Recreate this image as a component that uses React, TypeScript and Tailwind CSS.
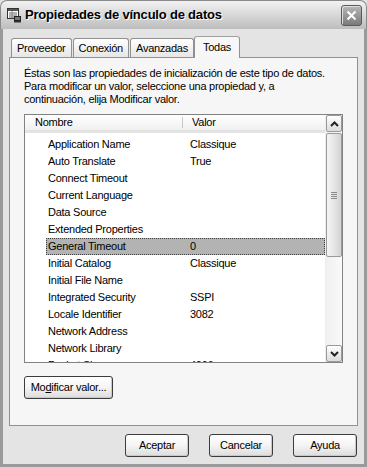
import React from 'react';

const rows: [string, string][] = [
  ['Application Name', 'Classique'],
  ['Auto Translate', 'True'],
  ['Connect Timeout', ''],
  ['Current Language', ''],
  ['Data Source', ''],
  ['Extended Properties', ''],
  ['General Timeout', '0'],
  ['Initial Catalog', 'Classique'],
  ['Initial File Name', ''],
  ['Integrated Security', 'SSPI'],
  ['Locale Identifier', '3082'],
  ['Network Address', ''],
  ['Network Library', ''],
  ['Packet Size', '4096'],
];

const XpButton: React.FC<{ children: React.ReactNode; className?: string }> = ({ children, className }) => (
  <button
    className={`h-[23px] rounded-[3px] border border-[#3c3c3c] bg-gradient-to-b from-[#ffffff] via-[#f4f4f4] to-[#dcdcdc] text-[11px] text-black shadow-[inset_-1px_-1px_0_#c8c8c8] ${className ?? ''}`}
  >
    {children}
  </button>
);

const DataLinkIcon = () => (
  <svg width="16" height="16" viewBox="0 0 16 16">
    <rect x="1.5" y="1.5" width="11" height="10" fill="#fff" stroke="#333" />
    <rect x="2" y="2" width="10" height="2" fill="#555" />
    <line x1="3" y1="6" x2="11" y2="6" stroke="#666" />
    <line x1="3" y1="8" x2="11" y2="8" stroke="#666" />
    <line x1="3" y1="10" x2="8" y2="10" stroke="#666" />
    <line x1="6" y1="4" x2="6" y2="11" stroke="#888" />
    <rect x="8.5" y="9.5" width="6" height="4" fill="#777" stroke="#222" />
    <rect x="8" y="14" width="7" height="1.5" fill="#333" />
  </svg>
);

const Arrow: React.FC<{ up?: boolean }> = ({ up }) => (
  <svg width="9" height="6" viewBox="0 0 9 6">
    <path d={up ? 'M1 5 L4.5 1.5 L8 5' : 'M1 1 L4.5 4.5 L8 1'} fill="none" stroke="#222" strokeWidth="2" />
  </svg>
);

export default function App() {
  return (
    <div
      className="w-[367px] h-[467px] flex flex-col bg-[#e2e2e2] overflow-hidden tracking-[-0.25px]"
      style={{ fontFamily: '"Liberation Sans", Arial, sans-serif' }}
    >
      {/* title bar */}
      <div className="h-[29px] shrink-0 flex items-center rounded-t-[7px] bg-gradient-to-b from-[#f2f2f2] via-[#d8d8d8] to-[#bdbdbd] border border-b-0 border-[#8a8a8a] pl-[5px] pr-[4px]">
        <DataLinkIcon />
        <span className="ml-[3px] text-[13px] font-bold text-black tracking-[-0.2px] [text-shadow:1px_1px_0_#ffffff]">
          Propiedades de vínculo de datos
        </span>
        <div className="ml-auto w-[21px] h-[21px] rounded-[3px] border border-[#5a5a5a] bg-gradient-to-b from-[#b8b8b8] to-[#7a7a7a] flex items-center justify-center shadow-[inset_1px_1px_0_#e0e0e0]">
          <svg width="11" height="11" viewBox="0 0 11 11">
            <path d="M1.5 1.5 L9.5 9.5 M9.5 1.5 L1.5 9.5" stroke="#fff" strokeWidth="2" />
          </svg>
        </div>
      </div>

      {/* body */}
      <div className="flex-1 flex flex-col border-x-[3px] border-b-[3px] border-[#9a9a9a] bg-[#e4e4e4] px-[6px]">
        {/* tabs */}
        <div className="mt-[6px] h-[22px] flex items-end pl-[2px] text-[11px] text-black">
          <div className="h-[19px] px-[5px] flex items-center border border-b-0 border-[#919191] rounded-t-[3px] bg-gradient-to-b from-[#ffffff] to-[#e6e6e6]">Proveedor</div>
          <div className="h-[19px] px-[5px] ml-[1px] flex items-center border border-b-0 border-[#919191] rounded-t-[3px] bg-gradient-to-b from-[#ffffff] to-[#e6e6e6]">Conexión</div>
          <div className="h-[19px] px-[5px] ml-[1px] flex items-center border border-b-0 border-[#919191] rounded-t-[3px] bg-gradient-to-b from-[#ffffff] to-[#e6e6e6]">Avanzadas</div>
          <div className="h-[22px] px-[8px] -mb-[1px] relative z-10 flex items-center border border-b-0 border-[#919191] rounded-t-[3px] bg-[#f7f7f7] border-t-[#a0a0a0]">Todas</div>
        </div>

        {/* panel */}
        <div className="h-[369px] border border-[#919191] bg-[#f6f6f6] px-[14px] pt-[9px] flex flex-col">
          <p className="text-[11px] leading-[13px] text-black">
            Éstas son las propiedades de inicialización de este tipo de datos.
            <br />
            Para modificar un valor, seleccione una propiedad y, a
            <br />
            continuación, elija Modificar valor.
          </p>

          {/* list */}
          <div className="mt-[8px] h-[249px] border border-[#828282] bg-white flex overflow-hidden">
            <div className="flex-1 flex flex-col overflow-hidden">
              <div className="h-[18px] shrink-0 flex text-[11px] bg-gradient-to-b from-[#ffffff] to-[#f0f0f0] border-b-[3px] border-[#e3e3e3]">
                <div className="w-[158px] pl-[10px] flex items-center border-r border-[#c8c8c8] my-[2px]">Nombre</div>
                <div className="pl-[9px] flex items-center">Valor</div>
              </div>
              <div className="pt-[3px] text-[11px]">
                {rows.map(([name, value]) => {
                  const sel = name === 'General Timeout';
                  return (
                    <div
                      key={name}
                      className={`h-[17px] flex items-center ml-[21px] ${sel ? 'bg-[#b3b3b3] outline outline-1 outline-dotted outline-[#404040] -outline-offset-1' : ''}`}
                    >
                      <div className="w-[144px] pl-[2px] shrink-0">{name}</div>
                      <div>{value}</div>
                    </div>
                  );
                })}
              </div>
            </div>
            {/* scrollbar */}
            <div className="w-[17px] shrink-0 flex flex-col bg-gradient-to-r from-[#f0f0f0] to-[#fafafa] border-l border-[#eeeeee]">
              <div className="h-[17px] rounded-[2px] border border-[#9a9a9a] bg-gradient-to-b from-[#ffffff] to-[#dcdcdc] flex items-center justify-center">
                <Arrow up />
              </div>
              <div className="mt-[1px] h-[124px] rounded-[2px] border border-[#9a9a9a] bg-gradient-to-r from-[#f4f4f4] via-[#e6e6e6] to-[#d4d4d4] flex flex-col items-center justify-center gap-[1px]">
                <div className="w-[6px] h-[1px] bg-[#8a8a8a]" />
                <div className="w-[6px] h-[1px] bg-[#8a8a8a]" />
                <div className="w-[6px] h-[1px] bg-[#8a8a8a]" />
                <div className="w-[6px] h-[1px] bg-[#8a8a8a]" />
              </div>
              <div className="flex-1" />
              <div className="h-[17px] rounded-[2px] border border-[#9a9a9a] bg-gradient-to-b from-[#ffffff] to-[#dcdcdc] flex items-center justify-center">
                <Arrow />
              </div>
            </div>
          </div>

          <div className="mt-[11px]">
            <XpButton className="w-[89px]">
              Mo<span className="underline">d</span>ificar valor...
            </XpButton>
          </div>
        </div>

        {/* bottom buttons */}
        <div className="mt-[8px] flex justify-end gap-[20px] pr-[1px]">
          <XpButton className="w-[64px]">Aceptar</XpButton>
          <XpButton className="w-[64px]">Cancelar</XpButton>
          <XpButton className="w-[64px]">Ayuda</XpButton>
        </div>
      </div>
    </div>
  );
}
